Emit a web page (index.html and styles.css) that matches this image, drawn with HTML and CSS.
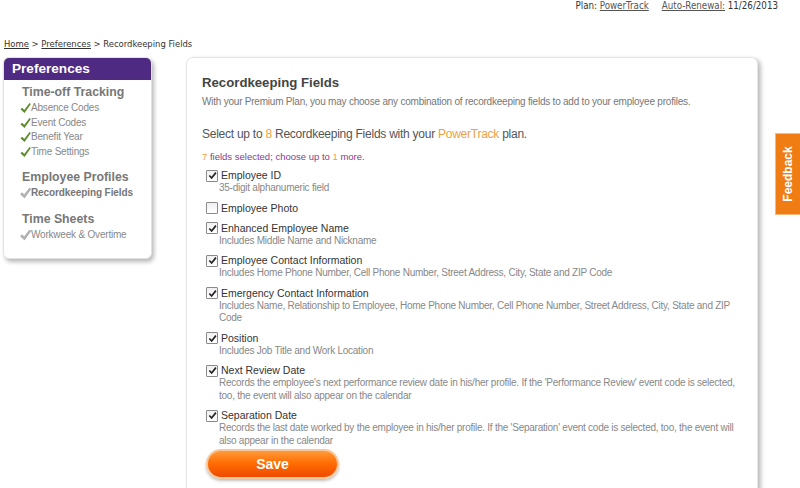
FILE: index.html
```html
<!DOCTYPE html>
<html>
<head>
<meta charset="utf-8">
<link rel="stylesheet" href="styles.css">
</head>
<body>
<div class="topbar">
  <span>Plan: <a href="#">PowerTrack</a></span>
  <span class="renew"><a href="#">Auto-Renewal:</a> 11/26/2013</span>
</div>
<div class="crumbs"><a href="#">Home</a> &gt; <a href="#">Preferences</a> &gt; Recordkeeping Fields</div>
<div class="main">
  <aside class="side">
    <div class="side-head">Preferences</div>
    <div class="side-body">
      <div class="grp">Time-off Tracking</div>
      <div class="itm"><svg class="chk" viewBox="0 0 12 12"><path d="M0.5 7.3 L2.4 5.7 L4.6 8.1 L10.4 0.6 L11.8 1.7 L4.9 11.4 Z" fill="#5b8a2b"/></svg>Absence Codes</div>
      <div class="itm"><svg class="chk" viewBox="0 0 12 12"><path d="M0.5 7.3 L2.4 5.7 L4.6 8.1 L10.4 0.6 L11.8 1.7 L4.9 11.4 Z" fill="#5b8a2b"/></svg>Event Codes</div>
      <div class="itm"><svg class="chk" viewBox="0 0 12 12"><path d="M0.5 7.3 L2.4 5.7 L4.6 8.1 L10.4 0.6 L11.8 1.7 L4.9 11.4 Z" fill="#5b8a2b"/></svg>Benefit Year</div>
      <div class="itm"><svg class="chk" viewBox="0 0 12 12"><path d="M0.5 7.3 L2.4 5.7 L4.6 8.1 L10.4 0.6 L11.8 1.7 L4.9 11.4 Z" fill="#5b8a2b"/></svg>Time Settings</div>
      <div class="grp gap">Employee Profiles</div>
      <div class="itm cur"><svg class="chk" viewBox="0 0 12 12"><path d="M0.5 7.3 L2.4 5.7 L4.6 8.1 L10.4 0.6 L11.8 1.7 L4.9 11.4 Z" fill="#b4b4b4" stroke="#999" stroke-width="0.6"/></svg>Recordkeeping Fields</div>
      <div class="grp gap">Time Sheets</div>
      <div class="itm"><svg class="chk" viewBox="0 0 12 12"><path d="M0.5 7.3 L2.4 5.7 L4.6 8.1 L10.4 0.6 L11.8 1.7 L4.9 11.4 Z" fill="#b4b4b4" stroke="#999" stroke-width="0.6"/></svg>Workweek &amp; Overtime</div>
    </div>
  </aside>
  <section class="card">
    <h1>Recordkeeping Fields</h1>
    <p class="sub">With your Premium Plan, you may choose any combination of recordkeeping fields to add to your employee profiles.</p>
    <p class="lead">Select up to <span class="or">8</span> Recordkeeping Fields with your <span class="or">PowerTrack</span> plan.</p>
    <p class="count"><span class="or">7</span> fields selected; choose up to <span class="or">1</span> more.</p>
    <ul class="fields">
      <li><div class="lbl"><span class="box"><svg viewBox="0 0 10 10"><path d="M1.5 5 L4 7.8 L8.8 1.8" fill="none" stroke="#222" stroke-width="1.8"/></svg></span>Employee ID</div><div class="desc">35-digit alphanumeric field</div></li>
      <li><div class="lbl"><span class="box"></span>Employee Photo</div></li>
      <li><div class="lbl"><span class="box"><svg viewBox="0 0 10 10"><path d="M1.5 5 L4 7.8 L8.8 1.8" fill="none" stroke="#222" stroke-width="1.8"/></svg></span>Enhanced Employee Name</div><div class="desc">Includes Middle Name and Nickname</div></li>
      <li><div class="lbl"><span class="box"><svg viewBox="0 0 10 10"><path d="M1.5 5 L4 7.8 L8.8 1.8" fill="none" stroke="#222" stroke-width="1.8"/></svg></span>Employee Contact Information</div><div class="desc">Includes Home Phone Number, Cell Phone Number, Street Address, City, State and ZIP Code</div></li>
      <li><div class="lbl"><span class="box"><svg viewBox="0 0 10 10"><path d="M1.5 5 L4 7.8 L8.8 1.8" fill="none" stroke="#222" stroke-width="1.8"/></svg></span>Emergency Contact Information</div><div class="desc">Includes Name, Relationship to Employee, Home Phone Number, Cell Phone Number, Street Address, City, State and ZIP Code</div></li>
      <li><div class="lbl"><span class="box"><svg viewBox="0 0 10 10"><path d="M1.5 5 L4 7.8 L8.8 1.8" fill="none" stroke="#222" stroke-width="1.8"/></svg></span>Position</div><div class="desc">Includes Job Title and Work Location</div></li>
      <li><div class="lbl"><span class="box"><svg viewBox="0 0 10 10"><path d="M1.5 5 L4 7.8 L8.8 1.8" fill="none" stroke="#222" stroke-width="1.8"/></svg></span>Next Review Date</div><div class="desc">Records the employee's next performance review date in his/her profile. If the 'Performance Review' event code is selected, too, the event will also appear on the calendar</div></li>
      <li><div class="lbl"><span class="box"><svg viewBox="0 0 10 10"><path d="M1.5 5 L4 7.8 L8.8 1.8" fill="none" stroke="#222" stroke-width="1.8"/></svg></span>Separation Date</div><div class="desc">Records the last date worked by the employee in his/her profile. If the 'Separation' event code is selected, too, the event will also appear in the calendar</div></li>
    </ul>
    <button class="save">Save</button>
  </section>
</div>
<div class="feedback"><span>Feedback</span></div>
</body>
</html>
```
FILE: styles.css
```css
html, body { margin: 0; padding: 0; background: #fff; }
body { font-family: "Liberation Sans", Arial, sans-serif; color: #333; overflow: hidden; height: 488px; }
a { color: #333; }
.topbar {
  display: flex; justify-content: flex-end; gap: 13px;
  font-family: "DejaVu Sans Condensed", "DejaVu Sans", sans-serif; font-size: 9.7px;
  color: #333; padding: 0 22px 0 0; height: 12px; line-height: 12px; margin-top: 0;
}
.topbar a { color: #555; }
.crumbs {
  font-family: "DejaVu Sans Condensed", "DejaVu Sans", sans-serif; font-size: 9.4px;
  padding: 0 0 0 4px; margin-top: 26px; line-height: 12px; color: #333;
}
.main { display: flex; align-items: flex-start; margin-top: 7px; }
.side {
  margin-left: 3px; width: 147px; border: 1px solid #e2e2e2; border-radius: 6px;
  box-shadow: 2px 3px 4px rgba(0,0,0,.28); background: #fff; overflow: hidden;
}
.side-head {
  background: #4e2a82; color: #fff; font-weight: bold; font-size: 13.6px;
  height: 22px; line-height: 22px; padding-left: 8px;
}
.side-body { padding: 3px 0 16px 18px; }
.grp { font-weight: bold; font-size: 12.3px; color: #777; line-height: 17px; margin: 1px 0 0 0; }
.grp.gap { margin-top: 10px; }
.itm { font-size: 10px; letter-spacing: -0.2px; color: #888; line-height: 14.5px; display: flex; align-items: center; margin-left: -2px; }
.itm.cur { font-weight: bold; color: #777; letter-spacing: -0.1px; }
.chk { width: 11px; height: 12px; margin-right: 0; }
.card {
  margin-left: 34px; width: 555px; height: 460px; border: 1px solid #e4e4e4; border-radius: 7px;
  box-shadow: 3px 2px 4px rgba(0,0,0,.25); padding: 14px 0 0 15px; background: #fff;
}
h1 { font-size: 13.2px; margin: 2px 0 0; color: #444; line-height: 18px; }
.sub { font-size: 10px; letter-spacing: -0.22px; color: #777; margin: 3px 0 0; line-height: 13px; }
.lead { font-size: 12px; letter-spacing: -0.25px; color: #555; margin: 18px 0 0; line-height: 16px; }
.or { color: #f2a040; }
.count { font-size: 9.5px; color: #8a3a8e; margin: 9px 0 0; line-height: 12px; }
.fields { list-style: none; margin: 6px 0 0; padding: 0 0 0 4px; }
.fields li { margin-bottom: 7px; }
.lbl { font-size: 10.5px; color: #333; line-height: 13px; display: flex; align-items: center; }
.box {
  width: 10px; height: 10px; border: 1px solid #8a8a8a; border-radius: 1px; margin-right: 3px;
  background: linear-gradient(#f0f0f0, #fff); display: flex; align-items: center; justify-content: center;
}
.box svg { width: 9px; height: 9px; }
.desc { font-size: 10px; letter-spacing: -0.25px; color: #888; line-height: 12.5px; padding-left: 13px; width: 522px; }
.save {
  margin: -5px 0 0 4px; width: 133px; height: 30px; border-radius: 15px;
  border: 2px solid #f7c79a; font-family: "Liberation Sans", Arial, sans-serif;
  font-weight: bold; font-size: 14px; color: #fff;
  background: linear-gradient(#ff9a3a, #ff6a00 50%, #ee4a00);
  box-shadow: 0 2px 3px rgba(0,0,0,.25);
}
.feedback {
  position: absolute; right: 0; top: 133px; width: 24px; height: 80px;
  background: #f07d14; border: 1px solid #f8b878; border-right: none;
  display: flex; align-items: center; justify-content: center;
}
.feedback span {
  transform: rotate(-90deg); color: #fff; font-weight: bold; font-size: 12px;
  white-space: nowrap; font-family: "Liberation Sans", Arial, sans-serif;
}
```
